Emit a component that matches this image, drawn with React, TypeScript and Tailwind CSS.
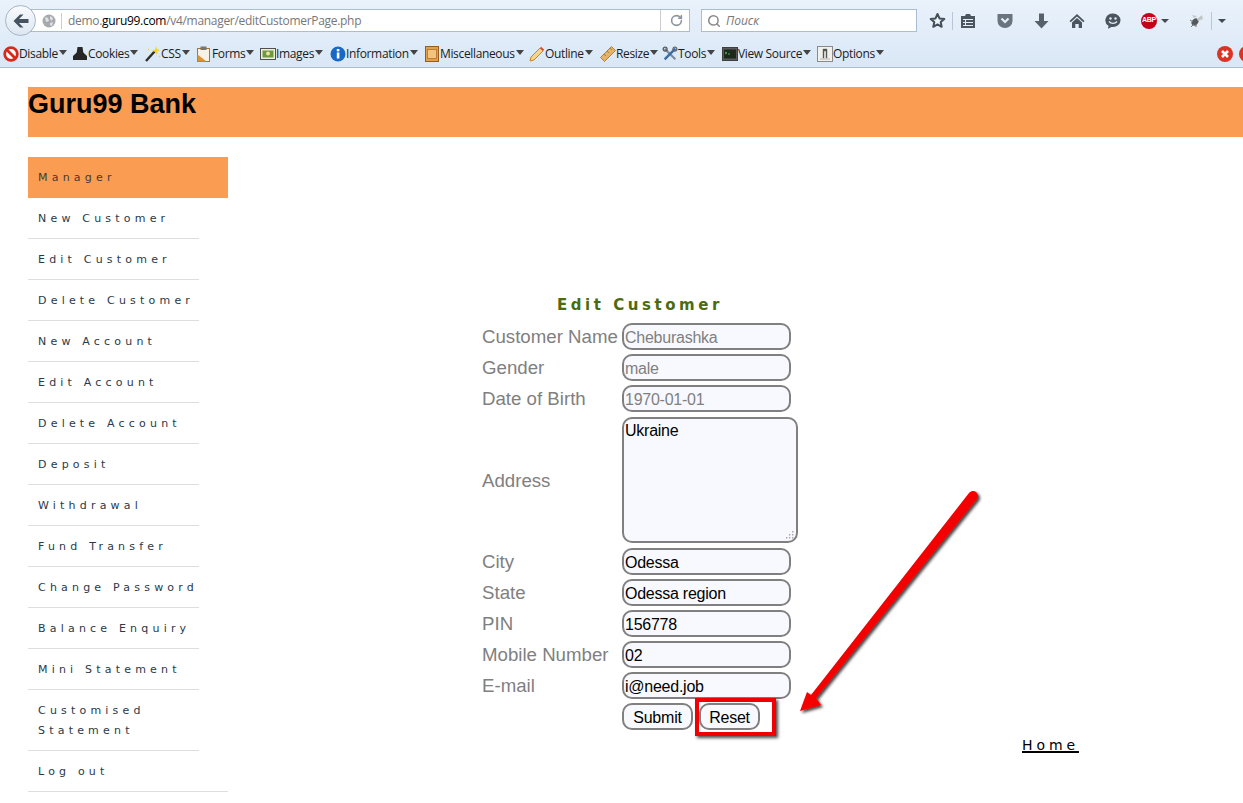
import type { ReactNode } from 'react';
import { RotateCw, Search } from 'lucide-react';

const Caret = () => <span className="ml-px mt-[-3px] h-0 w-0 border-x-[4px] border-t-[5px] border-x-transparent border-t-[#444]" />;

const ic = {
  disable: (
    <svg viewBox="0 0 16 16" className="h-[16px] w-[16px]">
      <circle cx="8" cy="8" r="6.3" fill="#fff" stroke="#d8281c" strokeWidth="2.8" />
      <path d="M3.5 3.5l9 9" stroke="#d8281c" strokeWidth="2.8" />
    </svg>
  ),
  cookies: (
    <svg viewBox="0 0 16 16" className="h-[16px] w-[16px]">
      <path d="M5.5 1h5l.8 5.5L15 10v4H1v-4l3.7-3.5z" fill="#262626" />
    </svg>
  ),
  css: (
    <svg viewBox="0 0 16 16" className="h-[16px] w-[16px]">
      <path d="M1 15l9-10" stroke="#2d2d2d" strokeWidth="2.4" />
      <path d="M11 0l1 3 3 1-2.6 1.4L12 9l-1.6-3L7 5l3-1.4z" fill="#f5d52c" />
      <path d="M3 3l1 1M14 10l1 1" stroke="#f5d52c" strokeWidth="1.4" />
    </svg>
  ),
  forms: (
    <svg viewBox="0 0 16 16" className="h-[16px] w-[16px]">
      <rect x="1.5" y="2.5" width="12" height="13" fill="#f6f2e6" stroke="#b5702a" />
      <path d="M1.5 8.5v7h9z" fill="#e2912d" />
      <rect x="4.5" y="0.5" width="6" height="3.5" fill="#767676" />
    </svg>
  ),
  images: (
    <svg viewBox="0 0 16 16" className="h-[16px] w-[16px]">
      <rect x="0.5" y="2.5" width="15" height="11" fill="#eaefe0" stroke="#4f4f4f" />
      <rect x="2.5" y="4.5" width="11" height="7" fill="#6d9a3a" />
      <circle cx="8" cy="7.5" r="2" fill="#ece0a4" />
    </svg>
  ),
  info: (
    <svg viewBox="0 0 16 16" className="h-[16px] w-[16px]">
      <circle cx="8" cy="8" r="7.5" fill="#1a68c6" />
      <rect x="6.8" y="6.5" width="2.6" height="6" fill="#fff" />
      <rect x="6.8" y="3" width="2.6" height="2.4" fill="#fff" />
    </svg>
  ),
  misc: (
    <svg viewBox="0 0 16 16" className="h-[16px] w-[16px]">
      <rect x="1.5" y="0.5" width="13" height="15" fill="#e2a04a" stroke="#995e1b" />
      <rect x="3.5" y="3.5" width="9" height="9" fill="#f2c47e" stroke="#a8692a" strokeWidth="0.7" />
    </svg>
  ),
  outline: (
    <svg viewBox="0 0 16 16" className="h-[16px] w-[16px]">
      <path d="M1 15l1-4 9-9 3 3-9 9z" fill="#f5d48c" stroke="#c47b22" strokeWidth="0.9" />
      <path d="M11 2l3 3 1.2-1.2-3-3z" fill="#d8483a" />
    </svg>
  ),
  resize: (
    <svg viewBox="0 0 16 16" className="h-[16px] w-[16px]">
      <path d="M0.5 11.5L11.5 0.5l4 4-11 11z" fill="#e4b36a" stroke="#a66e2a" strokeWidth="0.8" />
      <path d="M4 8l2 2M7 5l2 2M10 2l2 2" stroke="#a66e2a" strokeWidth="0.8" />
    </svg>
  ),
  tools: (
    <svg viewBox="0 0 18 18" className="h-[18px] w-[18px]">
      <path d="M3 3l12 12" stroke="#7d8996" strokeWidth="2.4" />
      <path d="M15 3L3 15" stroke="#3a6eaa" strokeWidth="2.8" />
      <circle cx="3.5" cy="3.5" r="2.2" fill="none" stroke="#555" strokeWidth="1.4" />
      <circle cx="14.5" cy="3.5" r="2.2" fill="none" stroke="#666" strokeWidth="1.4" />
    </svg>
  ),
  source: (
    <svg viewBox="0 0 16 14" className="h-[14px] w-[16px]">
      <rect x="0.5" y="0.5" width="15" height="13" fill="#5a5a5a" stroke="#3f3f3f" />
      <rect x="2" y="2.5" width="12" height="9" fill="#1c2a1c" />
      <path d="M3 5l2 1-2 1M6 7h2" stroke="#6c6" strokeWidth="0.8" fill="none" />
    </svg>
  ),
  options: (
    <svg viewBox="0 0 16 16" className="h-[16px] w-[16px]">
      <rect x="0.5" y="0.5" width="15" height="15" fill="#f1f1eb" stroke="#8a8a8a" />
      <path d="M3 13h10M6 3h4v9H9V5H7v7H6z" fill="#555" stroke="#555" strokeWidth="0.4" />
    </svg>
  ),
};

const devItems: { label: string; icon: ReactNode; w: string }[] = [
  { label: 'Disable', icon: ic.disable, w: 'w-[69px]' },
  { label: 'Cookies', icon: ic.cookies, w: 'w-[73px]' },
  { label: 'CSS', icon: ic.css, w: 'w-[51px]' },
  { label: 'Forms', icon: ic.forms, w: 'w-[64px]' },
  { label: 'Images', icon: ic.images, w: 'w-[70px]' },
  { label: 'Information', icon: ic.info, w: 'w-[94px]' },
  { label: 'Miscellaneous', icon: ic.misc, w: 'w-[105px]' },
  { label: 'Outline', icon: ic.outline, w: 'w-[71px]' },
  { label: 'Resize', icon: ic.resize, w: 'w-[62px]' },
  { label: 'Tools', icon: ic.tools, w: 'w-[60px]' },
  { label: 'View Source', icon: ic.source, w: 'w-[95px]' },
  { label: 'Options', icon: ic.options, w: 'w-[70px]' },
];

const menu = [
  'New Customer',
  'Edit Customer',
  'Delete Customer',
  'New Account',
  'Edit Account',
  'Delete Account',
  'Deposit',
  'Withdrawal',
  'Fund Transfer',
  'Change Password',
  'Balance Enquiry',
  'Mini Statement',
];

const Toolbar = () => (
  <div className="h-[68px] border-b border-[#a9bdd3] bg-gradient-to-b from-[#eaf2fb] to-[#d9e7f6] font-['Open_Sans',sans-serif] text-[#1c1c1c]">
    <div className="flex h-[41px] items-center pl-[5px]">
      <div className="z-10 flex h-[31px] w-[31px] items-center justify-center rounded-full border border-[#a5b5c6] bg-gradient-to-b from-[#f8fbff] to-[#dde6f0]">
        <svg viewBox="0 0 16 14" className="h-[14px] w-[16px]">
          <path d="M7 0.5L0.5 7 7 13.5h3.5L6 9h9.5V5H6l4.5-4.5z" fill="#45525f" />
        </svg>
      </div>
      <div className="ml-[-6px] flex h-[23px] w-[660px] items-center border border-[#a9bdd3] bg-white pl-[11px] text-[12px] text-[#777]">
        <svg viewBox="0 0 14 14" className="h-[14px] w-[14px]">
          <circle cx="7" cy="7" r="6.5" fill="#a6aaae" />
          <path d="M3 3l3 1 1 3-3 1zM8 2l3 2-1 3-2-2zM8 9l3-1-1 4-2-1z" fill="#dfe1e3" />
        </svg>
        <span className="ml-[5px] h-[16px] w-px bg-[#ccc]" />
        <span className="ml-[6px] tracking-[-0.3px]">
          demo.<span className="text-black">guru99.com</span>/v4/manager/editCustomerPage.php
        </span>
        <span className="ml-auto flex h-full w-[29px] items-center justify-center border-l border-[#ccc] pl-[2px]">
          <RotateCw size={13} strokeWidth={2.8} className="text-[#8a949e]" />
        </span>
      </div>
      <div className="ml-[11px] flex h-[23px] w-[216px] items-center gap-[5px] border border-[#a9bdd3] bg-white pl-[5px] text-[12px] italic text-[#777]">
        <Search size={14} strokeWidth={2.6} className="text-[#8a8a8a]" />
        Поиск
      </div>
      <div className="ml-[12px] flex items-center">
        <svg viewBox="0 0 17 17" className="h-[17px] w-[17px]">
          <path d="M8.5 2l2 4.4 4.8.5-3.6 3.2 1 4.7-4.2-2.4-4.2 2.4 1-4.7L1.7 6.9l4.8-.5z" fill="#eef4fa" stroke="#434e59" strokeWidth="2" strokeLinejoin="round" />
        </svg>
        <span className="ml-[6px] h-[18px] w-px bg-[#b8c6d6]" />
        <svg viewBox="0 0 16 16" className="ml-[7px] h-[16px] w-[16px]">
          <path d="M1 3h4l1-2h4l1 2h4v12H1z" fill="#4a5560" />
          <path d="M3 6.5h10M3 9.5h10M3 12.5h10M5.5 6v7" stroke="#e4edf6" strokeWidth="1" />
        </svg>
        <svg viewBox="0 0 16 16" className="ml-[21px] h-[16px] w-[16px]">
          <path d="M0.5 1h15v7a7.5 7 0 0 1-15 0z" fill="#69747f" />
          <path d="M4.5 5.5L8 9l3.5-3.5" stroke="#e4edf6" strokeWidth="2.2" fill="none" />
        </svg>
        <svg viewBox="0 0 15 16" className="ml-[21px] h-[16px] w-[15px]">
          <path d="M5 0.5h5V8h4.5l-7 7.5L0.5 8H5z" fill="#56616c" />
        </svg>
        <svg viewBox="0 0 16 16" className="ml-[20px] h-[16px] w-[16px]">
          <path d="M8 1l7.5 7-1.2 1.2L8 3.4 1.7 9.2.5 8z" fill="#4a5560" />
          <path d="M3 9.5l5-4.5 5 4.5V15H9.7v-4H6.3v4H3z" fill="#4a5560" />
        </svg>
        <svg viewBox="0 0 16 16" className="ml-[20px] h-[16px] w-[16px]">
          <path d="M8 0.5a7.5 6.8 0 0 1 0 13.6H6.5l-3.5 1.7.5-3A7.5 6.8 0 0 1 8 .5z" fill="#4a5560" />
          <circle cx="5.5" cy="5.5" r="1.2" fill="#e4edf6" />
          <circle cx="10.5" cy="5.5" r="1.2" fill="#e4edf6" />
          <path d="M4 8.5c2 2.4 6 2.4 8 0" stroke="#e4edf6" strokeWidth="1.3" fill="none" />
        </svg>
        <span className="ml-[20px] flex h-[16px] w-[16px] items-center justify-center rounded-full bg-[#c5001a] font-['Liberation_Sans',sans-serif] text-[7px] font-bold tracking-[-0.2px] text-white">
          ABP
        </span>
        <span className="ml-[4px] h-0 w-0 border-x-[4px] border-t-[4px] border-x-transparent border-t-[#3f4a55]" />
        <svg viewBox="0 0 16 16" className="ml-[19px] h-[16px] w-[16px]">
          <ellipse cx="7" cy="9" rx="3" ry="4" fill="#55585a" transform="rotate(40 7 9)" />
          <path d="M9 6l5-4 1 4-5 2zM6 5L4 2l5 1z" fill="#c3c6c9" />
          <path d="M2 7l3 2M3 14l3-3M8 14l0-3" stroke="#777" strokeWidth="1" />
        </svg>
        <span className="ml-[7px] h-[18px] w-px bg-[#b8c6d6]" />
        <span className="ml-[6px] h-0 w-0 border-x-[4px] border-t-[4px] border-x-transparent border-t-[#3f4a55]" />
      </div>
    </div>
    <div className="flex h-[26px] items-center pl-[3px] text-[12px] tracking-[-0.35px]">
      {devItems.map((item) => (
        <div key={item.label} className={`flex items-center ${item.w}`}>
          <span className="flex h-[16px] w-[16px] shrink-0 items-center justify-center">{item.icon}</span>
          {item.label}
          <Caret />
        </div>
      ))}
      <div className="ml-auto flex items-center gap-[6px]">
        <svg viewBox="0 0 16 16" className="h-[16px] w-[16px]">
          <circle cx="8" cy="8" r="8" fill="#dc3325" />
          <path d="M5 5l6 6M11 5l-6 6" stroke="#fff" strokeWidth="2.6" />
        </svg>
        <span className="mr-[-12px] h-[16px] w-[16px] rounded-full bg-[#dc3325]" />
      </div>
    </div>
  </div>
);

const Field = ({ label, value, muted }: { label: string; value: string; muted?: boolean }) => (
  <div className="flex h-[27px] items-center">
    <span className="w-[140px] whitespace-nowrap pt-[2px] text-[18.67px] leading-none text-[#808080]">{label}</span>
    <input
      readOnly
      value={value}
      className={`h-[27px] w-[169px] rounded-[10px] border-2 border-[#808080] bg-[#f8f9ff] px-px pt-[3px] text-[16px] tracking-[-0.25px] outline-none ${muted ? 'text-[#808080]' : 'text-black'}`}
    />
  </div>
);

const Sidebar = () => (
  <nav className="mt-5 w-[200px] font-['DejaVu_Sans',sans-serif] text-[11px] tracking-[4.2px] text-[#2a3a48]">
    <div className="flex h-[41px] items-center bg-[#fa9c52] pl-[10px] pt-px text-[#3d3d3d]">Manager</div>
    {menu.map((m) => (
      <div key={m} className="flex h-[41px] w-[171px] items-center whitespace-nowrap border-b border-[#dedede] pl-[10px] pt-[3px]">
        {m}
      </div>
    ))}
    <div className="w-[171px] border-b border-[#dedede] px-[10px] pb-[9px] pt-[11px] leading-[20px]">Customised Statement</div>
    <div className="flex h-[41px] items-center border-b border-[#dedede] pl-[10px] pt-[3px]">Log out</div>
  </nav>
);

const EditForm = () => (
  <div className="relative ml-[254px] mt-[159px] w-[330px] font-['Liberation_Sans',sans-serif]">
    <h2 className="ml-[75px] h-[19px] whitespace-nowrap font-['DejaVu_Sans',sans-serif] text-[15px] font-bold leading-[19px] tracking-[3.55px] text-[#4b6b12]">
      Edit Customer
    </h2>
    <div className="mt-[8px] flex flex-col gap-[4px]">
      <Field label="Customer Name" value="Cheburashka" muted />
      <Field label="Gender" value="male" muted />
      <Field label="Date of Birth" value="1970-01-01" muted />
      <div className="mt-[1px] mb-[1px] flex items-center">
        <span className="w-[140px] pt-[2px] text-[18.67px] leading-none text-[#808080]">Address</span>
        <div className="relative flex">
          <textarea
            readOnly
            value="Ukraine"
            className="h-[126px] w-[176px] resize-none rounded-[10px] border-2 border-[#808080] bg-[#f8f9ff] px-px pt-[2px] text-[16px] leading-[19px] tracking-[-0.25px] text-black outline-none"
          />
          <svg viewBox="0 0 9 9" className="absolute bottom-[4px] right-[4px] h-[9px] w-[9px]">
            <path d="M7 1h1.4v1.4H7zM4 4h1.4v1.4H4zM7 4h1.4v1.4H7zM1 7h1.4v1.4H1zM4 7h1.4v1.4H4zM7 7h1.4v1.4H7z" fill="#a8a8a8" />
          </svg>
        </div>
      </div>
      <Field label="City" value="Odessa" />
      <Field label="State" value="Odessa region" />
      <Field label="PIN" value="156778" />
      <Field label="Mobile Number" value="02" />
      <Field label="E-mail" value="i@need.job" />
      <div className="ml-[140px] flex gap-[6px]">
        <button className="h-[27px] w-[71px] rounded-[10px] border-2 border-[#808080] bg-[#f8f9ff] pt-px text-[16px] tracking-[-0.2px] text-black">Submit</button>
        <div className="relative">
          <button className="h-[27px] w-[61px] rounded-[10px] border-2 border-[#808080] bg-[#f8f9ff] pt-px text-[16px] tracking-[-0.3px] text-black">Reset</button>
          <div className="absolute left-[-4px] top-[-5px] h-[38px] w-[81px] border-[4px] border-[#f00000] shadow-[2px_2px_3px_rgba(0,0,0,0.7)]" />
        </div>
      </div>
    </div>
  </div>
);

export default function App() {
  return (
    <div className="relative h-[803px] overflow-hidden bg-white">
      <Toolbar />
      <div className="ml-[28px] mt-[19px] h-[50px] bg-[#fa9c52] font-['Liberation_Sans',sans-serif] text-[27px] font-bold leading-[34px] text-black">
        Guru99 Bank
      </div>
      <div className="ml-[28px] flex">
        <Sidebar />
        <div className="flex flex-col">
          <EditForm />
          <a className="ml-[794px] mt-[7px] whitespace-nowrap font-['DejaVu_Sans',sans-serif] text-[14px] leading-[17px] tracking-[3.9px] text-black underline decoration-[1.5px]">
            Home
          </a>
        </div>
      </div>
      <svg className="absolute left-[790px] top-[485px] h-[235px] w-[200px]" viewBox="790 485 200 235">
        <defs>
          <filter id="arrowShadow" x="-20%" y="-20%" width="140%" height="140%">
            <feDropShadow dx="2" dy="2" stdDeviation="1.5" floodColor="#000" floodOpacity="0.75" />
          </filter>
        </defs>
        <path
          d="M969 493a4.5 4.5 0 0 1 8 6L816 698 821 705 800 711 807 692 811 695z"
          fill="#f40000"
          filter="url(#arrowShadow)"
        />
      </svg>
    </div>
  );
}
